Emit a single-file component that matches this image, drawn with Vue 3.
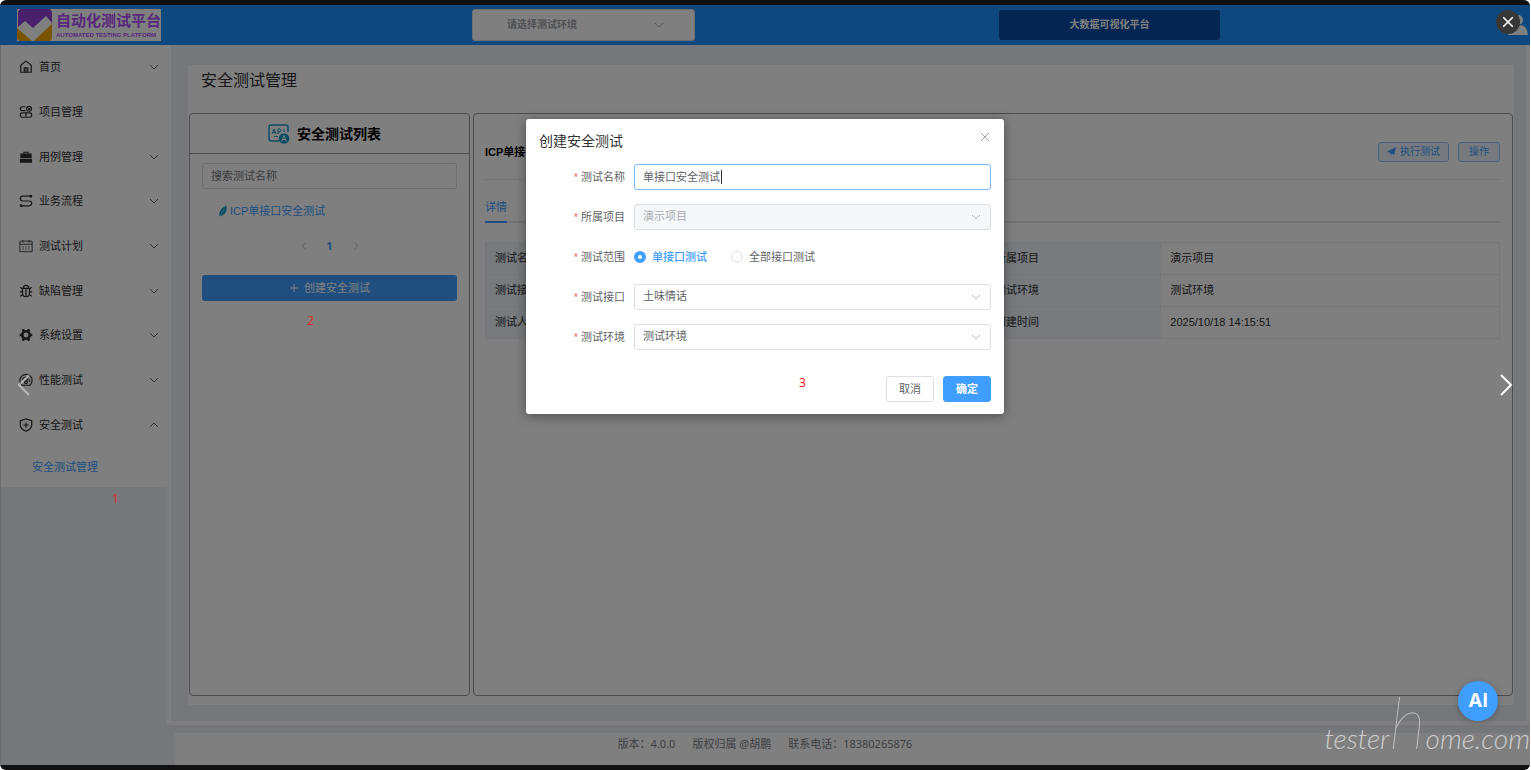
<script setup>
import { ref } from 'vue'

const menu = [
  { icon: 'home', label: '首页', arrow: 'down' },
  { icon: 'project', label: '项目管理', arrow: '' },
  { icon: 'case', label: '用例管理', arrow: 'down' },
  { icon: 'flow', label: '业务流程', arrow: 'down' },
  { icon: 'plan', label: '测试计划', arrow: 'down' },
  { icon: 'bug', label: '缺陷管理', arrow: 'down' },
  { icon: 'gear', label: '系统设置', arrow: 'down' },
  { icon: 'gauge', label: '性能测试', arrow: 'down' },
  { icon: 'shield', label: '安全测试', arrow: 'up' }
]

const details = [
  ['测试名称', 'ICP单接口安全测试', '所属项目', '演示项目'],
  ['测试接口', '土味情话', '测试环境', '测试环境'],
  ['测试人员', '', '创建时间', '2025/10/18 14:15:51']
]

const name = ref('单接口安全测试')
const scope = ref('single')
</script>

<template>
  <div class="frame">
    <div class="shell">
      <header class="topbar">
        <div class="brand">
          <svg class="brand-mark" viewBox="0 0 36 32" aria-hidden="true">
            <path d="M1 18V4Q1 0 5 0H31Q35 0 35 4V15L29 8L16 20L9 14Z" fill="#9040d8" />
            <path d="M0 18L16 32H4Q0 32 0 28ZM35 15V28Q35 32 31 32H16Z" fill="#f4a800" />
            <path d="M0 19L8 12L16 19L29 7L35 14L17 32H15Z" fill="#fff" />
          </svg>
          <div class="brand-text">
            <strong>自动化测试平台</strong>
            <small>AUTOMATED TESTING PLATFORM</small>
          </div>
        </div>
        <div class="env">
          <select aria-label="测试环境选择"><option>请选择测试环境</option></select>
          <svg class="chev" viewBox="0 0 10 10"><path d="M1 3L5 7L9 3" /></svg>
        </div>
        <button class="bigdata" type="button">大数据可视化平台</button>
        <svg class="avatar" viewBox="0 0 20 20"><circle cx="10" cy="5" r="5" /><path d="M0 20Q1 11 7 10Q10 12 13 10Q19 11 20 20Z" /></svg>
      </header>

      <div class="body">
        <aside class="side">
          <nav class="menu">
            <button v-for="m in menu" :key="m.label" type="button" class="menu-item">
              <svg class="ico" viewBox="0 0 16 16" aria-hidden="true">
                <g v-if="m.icon === 'home'"><path d="M2 6.500Q2.500 5 8 1.500Q13.500 5 14 6.500V14H2Z" /><path d="M6 14V9H10V14M8 10V14" /></g>
                <g v-else-if="m.icon === 'project'"><path d="M7.500 2H4Q1.500 2 1.500 4.200T4 6.500H7.500M3.500 9H12.500Q14.500 9 14.500 11.500T12.500 14H3.500Q1.500 14 1.500 11.500T3.500 9ZM8 9V14" /><circle cx="11.500" cy="4.300" r="2.800" /><path d="M10.500 4L11.500 5L13 3.500" /></g>
                <g v-else-if="m.icon === 'case'" class="solid"><path d="M5 4V2H11V4H14.500V9H1.500V4ZM6.200 4H9.800V3.200H6.200ZM1 10H15V14.500H1Z" fill-rule="evenodd" /></g>
                <g v-else-if="m.icon === 'flow'"><path d="M14 2.500H4.500Q1.500 2.500 1.500 5.200T4.500 8H11.500Q14.500 8 14.500 10.700T11.500 13.500H2" /><circle cx="13.500" cy="2.500" r="1" /><circle cx="2.500" cy="13.500" r="1" /></g>
                <g v-else-if="m.icon === 'plan'" class="thin"><path d="M1 2.500H15V14.500H1ZM1 6H15M4.500 1V4M11.500 1V4" /><path d="M4 9H5.500M7.300 9H8.700M10.500 9H12M4 11.500H5.500M7.300 11.500H8.700M10.500 11.500H12" /></g>
                <g v-else-if="m.icon === 'bug'"><path d="M4 5H12V10.500Q12 14.500 8 14.500T4 10.500ZM5 5Q5 1.500 8 1.500T11 5M8 5V14M1 9H4M12 9H15M1.500 3.500L4 6M14.500 3.500L12 6M1.500 14L4.500 12M14.500 14L11.500 12" /></g>
                <g v-else-if="m.icon === 'gear'"><circle cx="8" cy="8" r="4.300" class="ring" /><path class="teeth" d="M4.500 1.500L5.500 4M11.500 1.500L10.500 4M4.500 14.500L5.500 12M11.500 14.500L10.500 12M.8 8H3M13 8H15.200" /></g>
                <g v-else-if="m.icon === 'gauge'"><path d="M3.500 14Q1 11.500 1 8.500A7 7 0 0 1 15 8.500Q15 11.500 12.500 14ZM4 8.500A4 4 0 0 1 9 4.800M12 7.500V10" /><circle cx="8" cy="10.500" r="1.600" /><path d="M8.500 9.500L10.500 6" /></g>
                <g v-else><path d="M8 1L14.500 3V8Q14.500 12.500 8 15.200Q1.500 12.500 1.500 8V3Z" /><path d="M8 5V11M5 8H11" /></g>
              </svg>
              <span>{{ m.label }}</span>
              <svg v-if="m.arrow" class="chev" :class="m.arrow" viewBox="0 0 10 10"><path d="M1 3L5 7L9 3" /></svg>
            </button>
          </nav>
          <a class="sub" href="#">安全测试管理</a>
        </aside>

        <div class="right">
          <main class="main">
            <section class="card">
              <h1>安全测试管理</h1>
              <div class="panels">
                <section class="panel list">
                  <h2>
                    <svg viewBox="0 0 22 20" aria-hidden="true">
                      <path d="M11 17H3Q1 17 1 15V3Q1 1 3 1H18Q20 1 20 3V8" fill="none" stroke="#1a9bc9" stroke-width="1.500" />
                      <path d="M4 10L6 5L8 10M5 8.500H7.500M10 10V5H12Q14 6.500 12 8H10M16 5V8M6 12.500H10" fill="none" stroke="#1a9bc9" />
                      <circle cx="16" cy="14.500" r="5.300" fill="#1a9bc9" />
                      <path d="M13.700 17.500L16 11.500L18.300 17.500M14.500 15.500H17.500" fill="none" stroke="#fff" />
                    </svg>
                    安全测试列表
                  </h2>
                  <div class="list-body">
                    <input class="search" type="text" placeholder="搜索测试名称" aria-label="搜索测试名称">
                    <a class="entry" href="#">
                      <svg viewBox="0 0 10 12" aria-hidden="true"><path d="M8.500 .5Q9.500 8 4 10.500L2 11L1 12Q.5 4 8.500 .5Z" fill="#0d9cc4" /><path d="M1 12L6.500 4" stroke="#fff" stroke-width=".5" /></svg>
                      ICP单接口安全测试
                    </a>
                    <div class="pager">
                      <button type="button" aria-label="上一页"><svg class="chev left" viewBox="0 0 10 10"><path d="M1 3L5 7L9 3" /></svg></button>
                      <button type="button" class="cur">1</button>
                      <button type="button" aria-label="下一页"><svg class="chev next" viewBox="0 0 10 10"><path d="M1 3L5 7L9 3" /></svg></button>
                    </div>
                    <button class="create" type="button">
                      <svg viewBox="0 0 10 10" aria-hidden="true"><path d="M5 1V9M1 5H9" /></svg>
                      创建安全测试
                    </button>
                  </div>
                </section>

                <section class="panel info">
                  <div class="info-head">
                    <strong>ICP单接口安全测试</strong>
                    <div class="acts">
                      <button type="button"><svg viewBox="0 0 10 10" aria-hidden="true"><path d="M10 0L8 9L5.500 7.500L4 9.500V7L0 5ZM4 7L9 1.500Z" /></svg>执行测试</button>
                      <button type="button">操作</button>
                    </div>
                  </div>
                  <div class="tabs"><button type="button">详情</button></div>
                  <table>
                    <colgroup><col class="c-label"><col class="c-first"><col class="c-label"><col class="c-last"></colgroup>
                    <tbody>
                      <tr v-for="r in details" :key="r[0]">
                        <th scope="row">{{ r[0] }}</th><td>{{ r[1] }}</td>
                        <th scope="row">{{ r[2] }}</th><td>{{ r[3] }}</td>
                      </tr>
                    </tbody>
                  </table>
                </section>
              </div>
            </section>
          </main>
          <footer class="foot"><span>版本：4.0.0</span><span>版权归属 @胡鹏</span><span>联系电话：18380265876</span></footer>
        </div>
      </div>

      <div class="mask"></div>
      <span class="note n1">1</span>
      <span class="note n2">2</span>

      <form class="dialog" role="dialog" aria-labelledby="dlg-title" @submit.prevent>
        <div class="dlg-head">
          <h2 id="dlg-title">创建安全测试</h2>
          <button type="button" aria-label="关闭"><svg viewBox="0 0 10 10"><path d="M1 1L9 9M9 1L1 9" /></svg></button>
        </div>
        <div class="row">
          <label for="f-name">测试名称</label>
          <div class="ctl"><input id="f-name" v-model="name" class="box focus" type="text"><i class="caret"></i></div>
        </div>
        <div class="row">
          <label for="f-proj">所属项目</label>
          <div class="ctl"><select id="f-proj" class="box" disabled><option>演示项目</option></select><svg class="chev" viewBox="0 0 10 10"><path d="M1 3L5 7L9 3" /></svg></div>
        </div>
        <div class="row">
          <span class="lab">测试范围</span>
          <div class="ctl radios">
            <label><input v-model="scope" type="radio" name="scope" value="single"><span>单接口测试</span></label>
            <label><input v-model="scope" type="radio" name="scope" value="all"><span>全部接口测试</span></label>
          </div>
        </div>
        <div class="row">
          <label for="f-api">测试接口</label>
          <div class="ctl"><select id="f-api" class="box"><option>土味情话</option></select><svg class="chev" viewBox="0 0 10 10"><path d="M1 3L5 7L9 3" /></svg></div>
        </div>
        <div class="row">
          <label for="f-env">测试环境</label>
          <div class="ctl"><select id="f-env" class="box"><option>测试环境</option></select><svg class="chev" viewBox="0 0 10 10"><path d="M1 3L5 7L9 3" /></svg></div>
        </div>
        <div class="dlg-foot">
          <button type="button">取消</button>
          <button type="submit" class="ok">确定</button>
        </div>
        <span class="note n3">3</span>
      </form>
    </div>

    <button class="viewer-close" type="button" aria-label="关闭预览"><svg viewBox="0 0 10 10"><path d="M1 1L9 9M9 1L1 9" /></svg></button>
    <button class="viewer-arrow prev" type="button" aria-label="上一张"><svg viewBox="0 0 14 24"><path d="M12 2L2 12L12 22" /></svg></button>
    <button class="viewer-arrow forward" type="button" aria-label="下一张"><svg viewBox="0 0 14 24"><path d="M2 2L12 12L2 22" /></svg></button>
    <button class="ai" type="button">AI</button>
    <div class="watermark">tester<span>h</span>ome.com</div>
  </div>
</template>

<style>
body { margin: 0; background: #fff; }
</style>

<style scoped>
* { box-sizing: border-box; }
button, input, select { font: inherit; color: inherit; margin: 0; }
button { border: 0; background: none; padding: 0; cursor: pointer; }
a { text-decoration: none; }
h1, h2 { margin: 0; font-weight: 400; }
select { appearance: none; }

.frame {
  position: relative;
  height: 100vh;
  margin-right: 1px;
  padding: 5px 0;
  background: #111;
  border-radius: 6px;
  overflow: hidden;
  font: 11px/16px "Liberation Sans", "Noto Sans CJK SC", sans-serif;
  color: #303133;
}
.shell { position: relative; height: 100%; display: flex; flex-direction: column; background: #edeff6; }
.mask { position: absolute; inset: 0; background: rgba(0, 0, 0, .5); }

.chev { width: 10px; height: 10px; fill: none; stroke: #606266; stroke-width: 1; flex: none; }
.chev.up { transform: rotate(180deg); }
.chev.left { transform: rotate(90deg); }
.chev.next { transform: rotate(-90deg); }

.topbar {
  flex: none;
  height: 40px;
  display: grid;
  grid-template-columns: 472fr 223fr 304fr 221fr 310fr;
  align-items: center;
  background: #1e90ff;
}
.brand { display: flex; width: 144px; height: 32px; margin-left: 17px; background: #fff; overflow: hidden; }
.brand-mark { width: 36px; height: 32px; flex: none; }
.brand-text { display: flex; flex-direction: column; margin-left: 3px; color: #b050f8; white-space: nowrap; }
.brand-text strong { font-size: 15px; line-height: 22px; padding-top: 1px; font-weight: 700; }
.brand-text small { font-size: 6px; line-height: 6px; font-weight: 700; }
.env { position: relative; height: 32px; }
.env select { width: 100%; height: 100%; padding: 0 34px; border: 1px solid #dcdfe6; border-radius: 3px; background: #fff; color: #a0a3aa; font-size: 10px; font-weight: 700; }
.env .chev { position: absolute; right: 31px; top: 11px; stroke: #b0b4bc; }
.bigdata { grid-column: 4; height: 30px; border-radius: 3px; background: #0a4ba6; color: #fff; font-size: 10px; font-weight: 700; }
.avatar { grid-column: 5; justify-self: end; width: 20px; height: 20px; margin-right: 2px; fill: #fff; }

.body { flex: 1; min-height: 0; display: flex; }
.side { width: 167px; flex: none; border-left: 1px solid #d5d6da; }
.menu { display: flex; flex-direction: column; height: 402px; background: #fff; }
.menu-item { flex: 1; display: flex; align-items: center; padding: 0 8px 0 18px; text-align: left; }
.menu-item span { flex: 1; margin-left: 6px; }
.ico { width: 14px; height: 14px; fill: none; stroke: #303133; stroke-width: 1.4; }
.ico .solid { fill: #303133; stroke: none; }
.ico .thin { stroke-width: 1; }
.ico .ring { stroke-width: 3; }
.ico .teeth { stroke-width: 3; }
.sub { display: block; height: 40px; line-height: 40px; padding-left: 31px; background: #fff; color: #409eff; }

.right { flex: 1; min-width: 0; display: flex; flex-direction: column; }
.main { flex: 1; min-height: 0; display: flex; padding: 20px 12px 16px 17px; border: solid #fff; border-width: 0 4px 4px; }
.card { flex: 1; display: flex; flex-direction: column; padding: 0 1px 9px; background: #fff; }
.card h1 { height: 48px; padding-left: 12px; font-size: 16px; line-height: 32px; }
.panels { flex: 1; min-height: 0; display: grid; grid-template-columns: 281fr 1040fr; gap: 3px; }
.panel { border: 1px solid #999; border-radius: 4px; }
.list h2 { display: flex; align-items: center; justify-content: center; gap: 7px; height: 40px; padding-right: 10px; border-bottom: 1px solid #999; font-size: 14px; font-weight: 700; color: #000; margin-bottom: 9px; }
.list h2 svg { width: 22px; height: 20px; }
.list-body { padding: 0 12px; display: flex; flex-direction: column; }
.search { height: 26px; padding: 0 8px; border: 1px solid #dcdfe6; border-radius: 3px; background: #fff; }
.search::placeholder { color: #75777c; opacity: 1; }
.entry { display: flex; align-items: center; gap: 2px; height: 44px; padding-left: 16px; color: #409eff; }
.entry svg { width: 10px; height: 12px; }
.pager { display: flex; justify-content: center; height: 26px; }
.pager button { width: 26px; display: flex; align-items: center; justify-content: center; font: 700 11px/26px "Noto Sans", sans-serif; }
.pager .cur { color: #409eff; }
.pager .chev { width: 8px; height: 8px; stroke: #a8abb2; }
.create { display: flex; align-items: center; justify-content: center; gap: 5px; height: 26px; margin-top: 16px; border-radius: 3px; background: #409eff; color: #fff; }
.create svg { width: 10px; height: 10px; stroke: #fff; }

.info { padding: 28px 12px 0 11px; }
.info-head { display: flex; align-items: center; justify-content: space-between; height: 38px; padding-bottom: 18px; border-bottom: 1px solid #e4e7ed; }
.info-head strong { color: #000; }
.acts { display: flex; gap: 9px; }
.acts button { display: flex; align-items: center; gap: 4px; height: 20px; padding: 0 10px; border: 1px solid #8cc5ff; border-radius: 3px; background: #ecf5ff; color: #409eff; font-size: 10px; }
.acts button:first-child { padding: 0 8px; }
.acts svg { width: 9px; height: 9px; fill: #409eff; }
.tabs { height: 43px; padding-top: 12px; border-bottom: 2px solid #e4e7ed; }
.tabs button { height: 31px; border-bottom: 2px solid #409eff; color: #409eff; }
table { width: 100%; margin-top: 19px; border-collapse: collapse; table-layout: fixed; }
.c-label { width: 17.3%; }
.c-first { width: 32%; }
.c-last { width: 33.4%; }
th, td { height: 32px; padding: 0 9px 2px; border: 1px solid #ebeef5; text-align: left; }
th { background: #f0f4fb; color: #505256; font-weight: 500; }

.foot { flex: none; display: flex; justify-content: center; align-items: center; gap: 17px; height: 32px; margin: 8px 0 0 8px; padding: 0 175px 10px 0; background: #fff; color: #808288; font-family: "Noto Sans", "Noto Sans CJK SC", sans-serif; }

.dialog {
  position: absolute;
  top: 114px;
  left: 50%;
  width: 478px;
  margin-left: -239px;
  padding: 13px 13px 12px;
  background: #fff;
  border-radius: 3px;
  box-shadow: 0 2px 12px rgba(0, 0, 0, .4);
  color: #606266;
}
.dlg-head { display: flex; justify-content: space-between; height: 32px; }
.dlg-head h2 { font-size: 14px; line-height: 18px; color: #303133; }
.dlg-head button { width: 12px; height: 10px; }
.dlg-head svg { display: block; width: 10px; height: 10px; margin: auto; stroke: #a0a3a9; }
.row { display: flex; align-items: center; height: 26px; margin-bottom: 14px; }
.row > label, .lab { width: 86px; margin-right: 9px; text-align: right; }
.row > label::before, .lab::before { content: "*"; margin-right: 3px; color: #f56c6c; }
.ctl { position: relative; flex: 1; height: 26px; }
.box { display: block; width: 100%; height: 26px; padding: 0 8px 2px; border: 1px solid #dcdfe6; border-radius: 3px; background: #fff; color: #606266; outline: none; }
.focus { border-color: #79bbff; }
.box:disabled { background: #f5f7fa; color: #a8abb2; opacity: 1; }
.ctl .chev { position: absolute; right: 10px; top: 8px; stroke: #b4b8c0; }
.caret { position: absolute; left: 87px; top: 6px; width: 1px; height: 14px; background: #303133; }
.radios { display: flex; gap: 24px; }
.radios label { display: flex; align-items: center; gap: 6px; }
.radios input { appearance: none; width: 12px; height: 12px; border: 1px solid #dcdfe6; border-radius: 50%; background: #fff; }
.radios input:checked { border: 4px solid #409eff; }
.radios input:checked + span { color: #409eff; font-weight: 500; }
.dlg-foot { display: flex; justify-content: flex-end; gap: 9px; padding-top: 12px; }
.dlg-foot button { width: 48px; height: 26px; border: 1px solid #dcdfe6; border-radius: 3px; }
.dlg-foot .ok { border-color: #409eff; background: #409eff; color: #fff; font-weight: 700; }

.note { position: absolute; font: 12px/16px "Noto Sans", sans-serif; color: #e03030; }
.n1 { left: 112px; top: 486px; }
.n2 { left: 307px; top: 308px; }
.n3 { left: 273px; top: 256px; color: #f22; }

.viewer-close { position: absolute; right: 10px; top: 10px; width: 24px; height: 24px; border-radius: 50%; background: #383838; }
.viewer-close svg { display: block; width: 12px; height: 12px; margin: auto; stroke: #fff; stroke-width: 1.3; }
.viewer-arrow { position: absolute; top: 50%; margin-top: -12px; width: 14px; height: 24px; }
.viewer-arrow svg { display: block; width: 14px; height: 24px; fill: none; stroke: #fff; stroke-width: 2; }
.prev { left: 17px; opacity: .45; }
.forward { right: 17px; }
.ai { position: absolute; right: 32px; bottom: 49px; width: 40px; height: 40px; border-radius: 50%; background: #409eff; color: #fff; font: 700 19px/40px Inter, sans-serif; box-shadow: 0 1px 6px rgba(0, 0, 0, .25); }
.watermark { position: absolute; right: 0; bottom: 17px; font: italic 300 28px/30px Lato, sans-serif; color: #ccc; white-space: nowrap; }
.watermark span { font-size: 72px; font-weight: 100; line-height: 0; }
</style>
